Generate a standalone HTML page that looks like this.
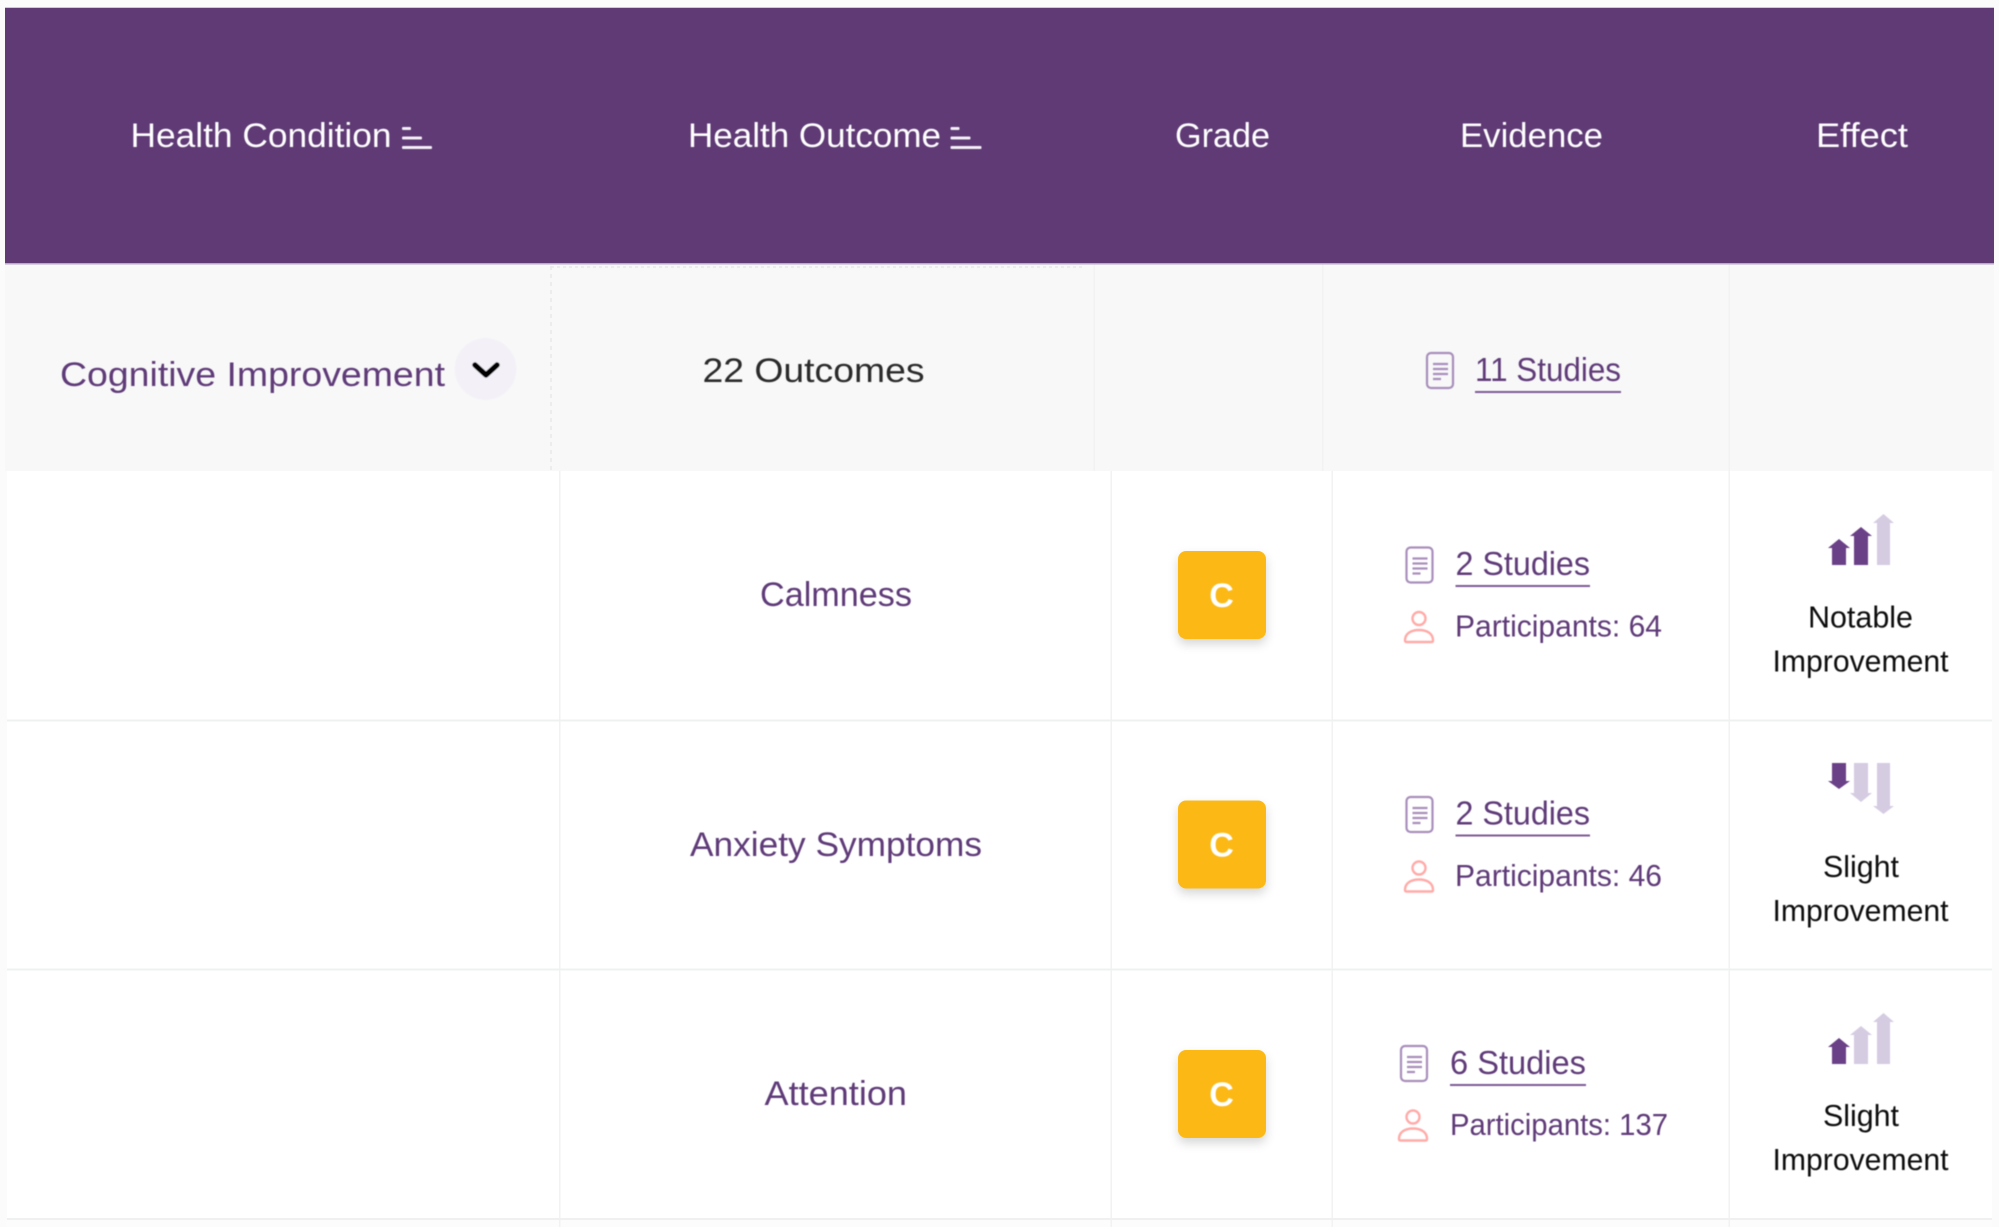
<!DOCTYPE html>
<html><head><meta charset="utf-8"><style>
html,body{margin:0;padding:0;background:#fbfbfb;width:1999px;height:1227px;overflow:hidden}
svg{display:block}
text{font-family:"Liberation Sans",sans-serif}
.h{font-size:34.500px;fill:#fff}
.p{fill:#5f3a78}
.n{font-size:34.500px}
.s{font-size:33.500px;fill:#5f3a78}
.t{font-size:30.500px;fill:#5f3a78}
.e{font-size:30.500px;fill:#111}
</style></head><body>
<svg xmlns="http://www.w3.org/2000/svg" width="1999" height="1227" viewBox="0 0 1999 1227">
<defs>
<filter id="sh" x="-30%" y="-30%" width="160%" height="170%"><feDropShadow dx="0" dy="5" stdDeviation="5" flood-color="#000" flood-opacity=".16"/></filter>
<filter id="b" x="-5%" y="-5%" width="110%" height="110%"><feGaussianBlur stdDeviation=".45"/></filter>
<g id="doc" fill="none" stroke="#a88fbb" stroke-width="2.200"><rect x="1" y="1" width="26" height="35" rx="4"/><path d="M7 12H22M7 17H22M7 22H22M7 27H15" stroke-width="2.200"/></g>
<g id="per" fill="none" stroke="#ffaba8" stroke-width="2.400"><circle cx="16" cy="8" r="6.500"/><path d="M2 30C2 23 8 19.500 16 19.500C24 19.500 30 23 30 30C30 31 29.500 31.500 28.500 31.500H3.500C2.500 31.500 2 31 2 30Z"/></g>
</defs>

<rect width="1999" height="1227" fill="#fbfbfb"/>
<rect x="5" y="264" width="1989" height="207" fill="#f8f8f8"/>
<rect x="7" y="471" width="1985" height="748" fill="#fff"/>
<rect x="7" y="1219" width="1985" height="8" fill="#fcfcfc"/>

<!-- grid -->
<g fill="#f2f2f3">
<rect x="1093.500" y="264" width="1.500" height="207"/>
<rect x="1322" y="264" width="1.500" height="207"/>
<rect x="1728.500" y="264" width="1.500" height="207"/>
<rect x="559" y="471" width="1.500" height="756"/>
<rect x="1110.500" y="471" width="1.500" height="756"/>
<rect x="1331.500" y="471" width="1.500" height="756"/>
<rect x="1728.500" y="471" width="1.500" height="756"/>
</g>
<path d="M551 266V470" stroke="#e8e8e8" stroke-width="1.500" stroke-dasharray="4 4"/>
<path d="M551 267H1085" stroke="#e8e8e8" stroke-width="1.500" stroke-dasharray="3 3"/>
<g fill="#eff1f1">
<rect x="7" y="719.500" width="1985" height="2"/>
<rect x="7" y="968.500" width="1985" height="2"/>
<rect x="7" y="1218" width="1985" height="2"/>
</g>

<!-- header -->
<rect x="5" y="8" width="1989" height="256" fill="#5f3a75"/>
<rect x="5" y="7" width="1989" height="1" fill="#cfc6da"/>
<rect x="5" y="263" width="1989" height="1.500" fill="#b9a9c8"/>

<g filter="url(#b)">
<g class="h">
<text class="h" x="130.500" y="147" textLength="261" lengthAdjust="spacingAndGlyphs">Health Condition</text>
<text class="h" x="688" y="147" textLength="253" lengthAdjust="spacingAndGlyphs">Health Outcome</text>
<text class="h" x="1175" y="147" textLength="95" lengthAdjust="spacingAndGlyphs">Grade</text>
<text class="h" x="1460" y="147" textLength="143" lengthAdjust="spacingAndGlyphs">Evidence</text>
<text class="h" x="1816" y="147" textLength="92" lengthAdjust="spacingAndGlyphs">Effect</text>
</g>
<g fill="#f4f0f7">
<rect x="402" y="127" width="9" height="3" rx="1"/><rect x="402" y="136.500" width="20" height="3" rx="1"/><rect x="402" y="146" width="30" height="3" rx="1"/>
<rect x="950.500" y="127" width="9" height="3" rx="1"/><rect x="950.500" y="136.500" width="20" height="3" rx="1"/><rect x="950.500" y="146" width="31" height="3" rx="1"/>
</g>

<!-- summary row -->
<text class="n p" x="60" y="386" textLength="385" lengthAdjust="spacingAndGlyphs">Cognitive Improvement</text>
<circle cx="485.500" cy="369" r="31" fill="#f3f1f7"/>
<path d="M475 365L486 375L497 365" fill="none" stroke="#000" stroke-width="5.500" stroke-linecap="round" stroke-linejoin="round"/>
<text class="n" fill="#2a2a2a" x="702.500" y="382" textLength="222" lengthAdjust="spacingAndGlyphs">22 Outcomes</text>
<use href="#doc" x="1426" y="352"/>
<text class="s" x="1475" y="381" textLength="146" lengthAdjust="spacingAndGlyphs">11 Studies</text>
<rect x="1475" y="391" width="146" height="2" fill="#7d5a96"/>

<!-- row 1 -->
<text class="n p" x="760" y="606" textLength="152" lengthAdjust="spacingAndGlyphs">Calmness</text>
<use href="#doc" x="1405.500" y="546.500"/>
<text class="s" x="1455.500" y="575" textLength="134.500" lengthAdjust="spacingAndGlyphs">2 Studies</text>
<rect x="1455.500" y="585" width="134.500" height="2" fill="#7d5a96"/>
<use href="#per" x="1403" y="610.500"/>
<text class="t" x="1455" y="636.500" textLength="207" lengthAdjust="spacingAndGlyphs">Participants: 64</text>
<text class="e" x="1808" y="627.500" textLength="105" lengthAdjust="spacingAndGlyphs">Notable</text>
<text class="e" x="1772.500" y="671.500" textLength="176" lengthAdjust="spacingAndGlyphs">Improvement</text>

<!-- row 2 -->
<text class="n p" x="690" y="856" textLength="292" lengthAdjust="spacingAndGlyphs">Anxiety Symptoms</text>
<use href="#doc" x="1405.500" y="796"/>
<text class="s" x="1455.500" y="824.500" textLength="134.500" lengthAdjust="spacingAndGlyphs">2 Studies</text>
<rect x="1455.500" y="834.500" width="134.500" height="2" fill="#7d5a96"/>
<use href="#per" x="1403" y="860"/>
<text class="t" x="1455" y="886" textLength="207" lengthAdjust="spacingAndGlyphs">Participants: 46</text>
<text class="e" x="1823" y="877" textLength="76" lengthAdjust="spacingAndGlyphs">Slight</text>
<text class="e" x="1772.500" y="921" textLength="176" lengthAdjust="spacingAndGlyphs">Improvement</text>

<!-- row 3 -->
<text class="n p" x="764.500" y="1105" textLength="142.500" lengthAdjust="spacingAndGlyphs">Attention</text>
<use href="#doc" x="1400" y="1045"/>
<text class="s" x="1450" y="1074" textLength="136" lengthAdjust="spacingAndGlyphs">6 Studies</text>
<rect x="1450" y="1084" width="136" height="2" fill="#7d5a96"/>
<use href="#per" x="1397" y="1109"/>
<text class="t" x="1450" y="1135" textLength="218" lengthAdjust="spacingAndGlyphs">Participants: 137</text>
<text class="e" x="1823" y="1126" textLength="76" lengthAdjust="spacingAndGlyphs">Slight</text>
<text class="e" x="1772.500" y="1170" textLength="176" lengthAdjust="spacingAndGlyphs">Improvement</text>
</g>

<!-- grade -->
<g filter="url(#sh)">
<rect x="1178" y="551" width="88" height="88" rx="8" fill="#fcb918"/>
<rect x="1178" y="800.500" width="88" height="88" rx="8" fill="#fcb918"/>
<rect x="1178" y="1050" width="88" height="88" rx="8" fill="#fcb918"/>
</g>
<g font-size="34" font-weight="700" fill="#fff" text-anchor="middle" filter="url(#b)">
<text x="1221.500" y="607">C</text><text x="1221.500" y="856.500">C</text><text x="1221.500" y="1106">C</text>
</g>

<g filter="url(#b)">
<!-- arrows row 1 -->
<path fill="#6b4187" d="M1832 565V548H1828L1839 539L1850 548H1846V565Z"/>
<path fill="#6b4187" d="M1854 565V536H1850L1861 527L1872 536H1868V565Z"/>
<path fill="#d5cce2" d="M1877 565V523H1873L1883.500 514L1894 523H1890V565Z"/>
<!-- arrows row 2 -->
<path fill="#6b4187" d="M1832 763H1846V781H1850L1839 789L1828 781H1832Z"/>
<path fill="#d5cce2" d="M1854 763H1868V793H1872L1861 802L1850 793H1854Z"/>
<path fill="#d5cce2" d="M1877 763H1890V806H1894L1883.500 814L1873 806H1877Z"/>
<!-- arrows row 3 -->
<path fill="#6b4187" d="M1832 1064V1047H1828L1839 1038L1850 1047H1846V1064Z"/>
<path fill="#d5cce2" d="M1854 1064V1035H1850L1861 1026L1872 1035H1868V1064Z"/>
<path fill="#d5cce2" d="M1877 1064V1022H1873L1883.500 1013L1894 1022H1890V1064Z"/>
</g>
</svg>
</body></html>
